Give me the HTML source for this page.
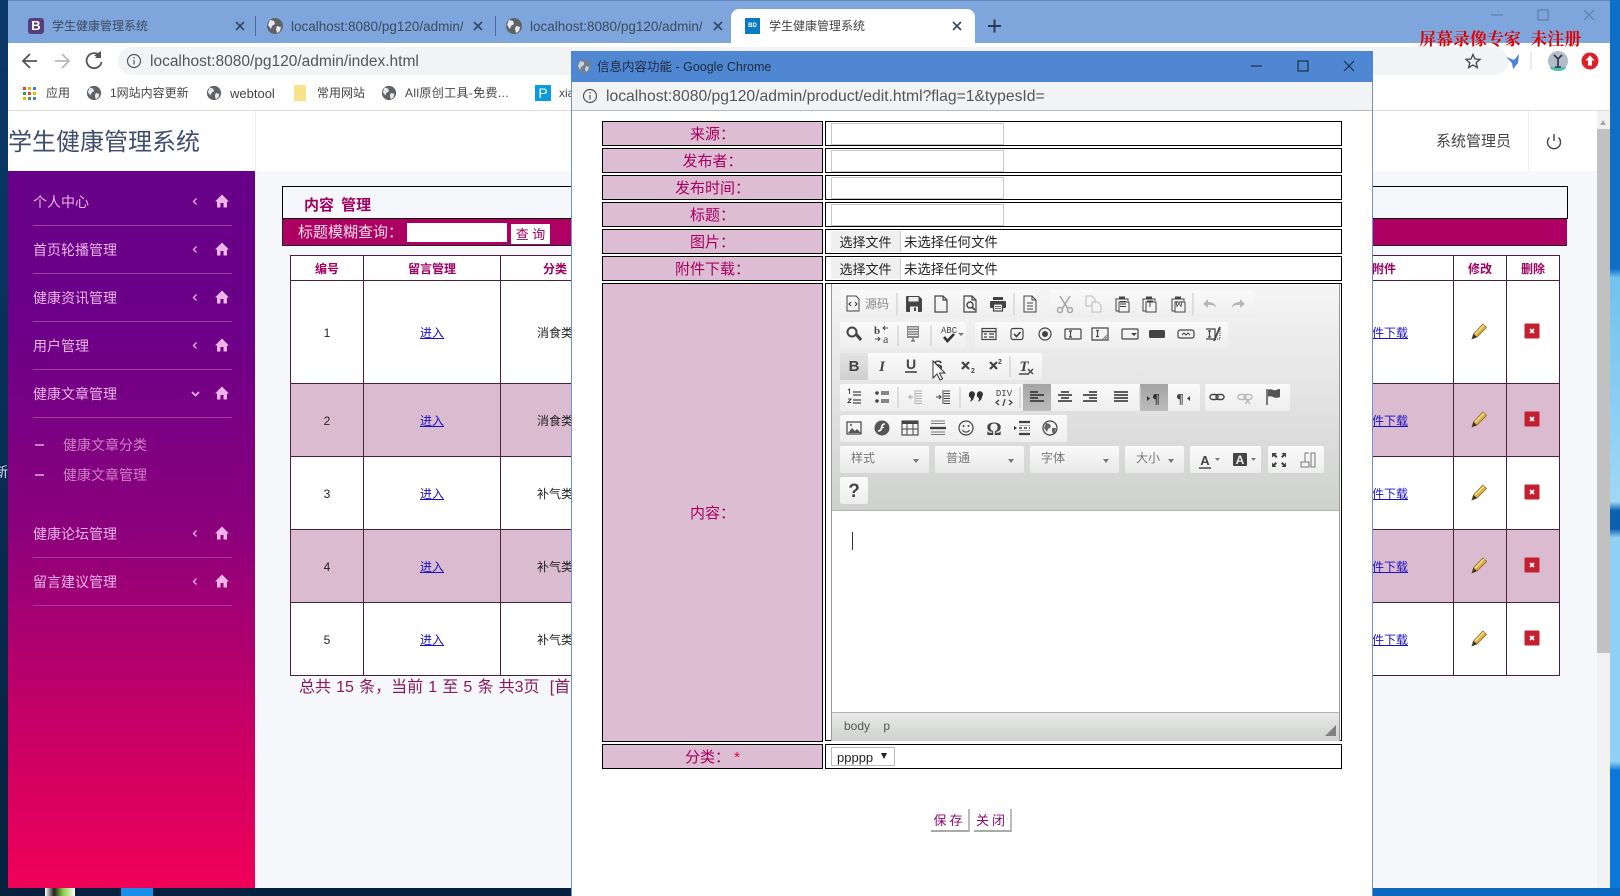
<!DOCTYPE html>
<html lang="zh"><head><meta charset="utf-8"><title>学生健康管理系统</title>
<style>
html,body{margin:0;padding:0}
body{position:relative;width:1620px;height:896px;overflow:hidden;background:#06213d;font-family:"Liberation Sans","Noto Sans CJK SC",sans-serif;font-size:12px;color:#333}
.a{position:absolute}
.t{position:absolute;white-space:nowrap;line-height:1}
.c{transform:translateX(-50%)}
.side{color:#ecb4e8;font-size:14px}
.sub{color:#cf7fc6;font-size:14px}
.ln{position:absolute;left:33px;width:199px;height:1px;background:#a63aa0}
.h{position:absolute;line-height:1;white-space:nowrap;transform:translateX(-50%);font-size:12px;color:#a0005f;font-weight:bold;top:263px}
.v{position:absolute;width:1px;top:255px;height:421px;background:#4a2040}
.hl{position:absolute;left:290px;width:1270px;height:1px;background:#4a2040}
.lk{color:#1a10c8;text-decoration:underline;font-size:12px;position:absolute;white-space:nowrap;line-height:1}
.num{font-size:12px;color:#222}
.lab{position:absolute;left:602px;width:219px;height:23px;background:#ddbdd3;border:1px solid #000;text-align:center;line-height:25px;font-size:15px;color:#a8005f}
.val{position:absolute;left:825px;width:515px;height:23px;background:#fff;border:1px solid #000;border-width:1.5px}
.inp{position:absolute;left:831px;width:171px;height:20px;background:#fff;border:1px solid #c8c8c8}
.fb{position:absolute;left:831px;width:69px;height:21px;background:#efefef;border-right:1px solid #ccc;text-align:center;line-height:23px;font-size:13px;color:#222}
.ft{position:absolute;left:904px;font-size:13.4px;color:#222;white-space:nowrap;line-height:23px}
.tg{position:absolute;background:linear-gradient(#fafafa,#eeeeee);border-radius:2px}
.cb{position:absolute;top:446px;height:27px;background:linear-gradient(#fafafa,#e8e8e8);border-radius:2px;font-size:12px;color:#777;line-height:27px}
.cb span{position:absolute;left:11px;top:-1px}
.cb i{position:absolute;right:10px;top:13px;width:0;height:0;border:3px solid transparent;border-top:4px solid #777;border-bottom:0}
</style></head>
<body>

<!-- desktop strips -->
<div class="a" style="left:0;top:0;width:8px;height:896px;background:linear-gradient(#0a3a6a,#06213d)"></div>
<div class="t" style="left:-6px;top:465px;font-size:14px;color:#dde">新</div>
<div class="a" style="left:1610px;top:0;width:10px;height:896px;background:linear-gradient(#0e6fc8 0,#0e6fc8 30%,#6fc3f0 31%,#a0d8f5 56%,#0a60b0 57%,#0a60b0 59%,#8fd0f5 60%,#8fd0f5 85%,#0a78d8 86%)"></div>
<div class="a" style="left:1372px;top:888px;width:248px;height:8px;background:#0a68c0"></div>
<div class="a" style="left:45px;top:888px;width:30px;height:8px;background:linear-gradient(90deg,#fff,#222 30%,#8c4 60%,#fff)"></div>
<div class="a" style="left:121px;top:888px;width:32px;height:8px;background:#1a90e8"></div>

<!-- browser chrome -->
<div class="a" style="left:8px;top:0;width:1602px;height:43px;background:#7ea6dd;border-top:1px solid #5f86bd;box-sizing:border-box"></div>
<div class="a" style="left:8px;top:43px;width:1602px;height:68px;background:#fff;border-bottom:1px solid #dcdcdc;box-sizing:border-box"></div>
<div class="a" style="left:731px;top:9px;width:244px;height:34px;background:#fff;border-radius:8px 8px 0 0"></div>
<div class="a" style="left:118px;top:47px;width:1390px;height:28px;background:#f1f3f4;border-radius:14px"></div>

<div class="a" style="left:28px;top:18px;width:16px;height:16px;background:#563d7c;border-radius:3px;color:#fff;font-weight:bold;font-size:13px;line-height:16px;text-align:center">B</div>
<div class="t" style="left:52px;top:20px;color:#3c4a5e">学生健康管理系统</div>
<div class="t" style="left:291px;top:19px;width:172px;overflow:hidden;font-size:13.5px;line-height:15px;color:#3c4a5e">localhost:8080/pg120/admin/</div>
<div class="t" style="left:530px;top:19px;width:172px;overflow:hidden;font-size:13.5px;line-height:15px;color:#3c4a5e">localhost:8080/pg120/admin/</div>
<div class="a" style="left:255px;top:16px;width:1px;height:20px;background:#4a6a9a"></div>
<div class="a" style="left:495px;top:16px;width:1px;height:20px;background:#4a6a9a"></div>
<div class="a" style="left:745px;top:18px;width:15px;height:16px;background:#0a7ac4;color:#fff;font-size:6px;font-weight:bold;line-height:16px;text-align:center">BD</div>
<div class="t" style="left:769px;top:20px;color:#444">学生健康管理系统</div>
<div class="t" style="left:150px;top:54px;font-size:15.5px;line-height:16px;color:#555">localhost:8080/pg120/admin/index.html</div>

<div class="t" style="left:46px;top:87px;color:#444">应用</div>
<div class="t" style="left:110px;top:87px;color:#444">1网站内容更新</div>
<div class="t" style="left:230px;top:87px;color:#444;font-size:13px">webtool</div>
<div class="t" style="left:317px;top:87px;color:#444">常用网站</div>
<div class="t" style="left:405px;top:87px;color:#444;letter-spacing:.35px">All原创工具-免费...</div>
<div class="a" style="left:535px;top:85px;width:16px;height:16px;background:#0a9ae0;color:#fff;font-size:14px;line-height:16px;text-align:center">P</div>
<div class="t" style="left:559px;top:87px;color:#444">xia</div>
<div class="a" style="left:294px;top:85px;width:12px;height:16px;background:#f8e38a;border-radius:1px"></div>

<div class="t" style="left:1419px;top:31px;font-family:'Liberation Serif','Noto Serif CJK SC',serif;font-size:17px;font-weight:bold;color:#e00000;word-spacing:5px">屏幕录像专家 未注册</div>

<!-- app header -->
<div class="a" style="left:8px;top:111px;width:1589px;height:60px;background:#fff"></div>
<div class="a" style="left:255px;top:111px;width:1px;height:60px;background:#eee"></div>
<div class="a" style="left:1528px;top:111px;width:1px;height:60px;background:#eee"></div>
<div class="t" style="left:8px;top:131px;font-size:24px;color:#3f4d6e">学生健康管理系统</div>
<div class="t" style="left:1436px;top:134px;font-size:15px;color:#444">系统管理员</div>

<!-- main background -->
<div class="a" style="left:255px;top:171px;width:1342px;height:717px;background:#f5f7fb"></div>

<!-- sidebar -->
<div class="a" style="left:8px;top:171px;width:247px;height:717px;background:linear-gradient(#680088 0,#6c0088 22%,#8b007c 50%,#c40066 76%,#f00058 100%)"></div>
<div class="t side" style="left:33px;top:195px">个人中心</div><div class="ln" style="top:225px"></div>
<div class="t side" style="left:33px;top:243px">首页轮播管理</div><div class="ln" style="top:273px"></div>
<div class="t side" style="left:33px;top:291px">健康资讯管理</div><div class="ln" style="top:321px"></div>
<div class="t side" style="left:33px;top:339px">用户管理</div><div class="ln" style="top:369px"></div>
<div class="t side" style="left:33px;top:387px">健康文章管理</div><div class="ln" style="top:417px"></div>
<div class="a" style="left:35px;top:444px;width:9px;height:2px;background:#cf7fc6"></div><div class="t sub" style="left:63px;top:438px">健康文章分类</div>
<div class="a" style="left:35px;top:474px;width:9px;height:2px;background:#cf7fc6"></div><div class="t sub" style="left:63px;top:468px">健康文章管理</div>
<div class="t side" style="left:33px;top:527px">健康论坛管理</div><div class="ln" style="top:557px"></div>
<div class="t side" style="left:33px;top:575px">留言建议管理</div><div class="ln" style="top:605px"></div>

<!-- content head -->
<div class="a" style="left:282px;top:186px;width:1286px;height:33px;box-sizing:border-box;border:1px solid #000;background:#f5f7fb"></div>
<div class="t" style="left:304px;top:198px;font-size:15px;font-weight:bold;color:#a0005f;word-spacing:3px">内容 管理</div>
<div class="a" style="left:282px;top:219px;width:1285px;height:27px;background:#ae0062;box-sizing:border-box;border-bottom:1px solid #222;border-left:1px solid #222"></div>
<div class="t" style="left:298px;top:225px;font-size:15px;color:#f0e0ea">标题模糊查询：</div>
<div class="a" style="left:407px;top:223px;width:100px;height:19px;background:#fff"></div>
<div class="a" style="left:511px;top:224px;width:39px;height:20px;background:#fff;color:#a0005f;font-size:13px;line-height:21px;text-align:center">查 询</div>

<!-- table -->
<div class="a" style="left:290px;top:255px;width:1270px;height:420px;background:#fff"></div>
<div class="a" style="left:290px;top:383px;width:1270px;height:73px;background:#dabbd0"></div>
<div class="a" style="left:290px;top:529px;width:1270px;height:73px;background:#dabbd0"></div>
<div class="hl" style="top:255px"></div><div class="hl" style="top:280px"></div><div class="hl" style="top:383px"></div><div class="hl" style="top:456px"></div><div class="hl" style="top:529px"></div><div class="hl" style="top:602px"></div><div class="hl" style="top:675px"></div>
<div class="v" style="left:290px"></div><div class="v" style="left:363px"></div><div class="v" style="left:500px"></div><div class="v" style="left:1453px"></div><div class="v" style="left:1506px"></div><div class="v" style="left:1559px"></div>
<div class="h" style="left:327px">编号</div><div class="h" style="left:432px">留言管理</div><div class="h" style="left:555px">分类</div><div class="h" style="left:1384px">附件</div><div class="h" style="left:1480px">修改</div><div class="h" style="left:1533px">删除</div>

<div class="t c num" style="left:327px;top:327px">1</div><div class="lk c" style="left:432px;top:327px">进入</div><div class="t" style="left:537px;top:327px;color:#222">消食类</div><div class="lk" style="left:1360px;top:327px">附件下载</div>
<div class="t c num" style="left:327px;top:415px">2</div><div class="lk c" style="left:432px;top:415px">进入</div><div class="t" style="left:537px;top:415px;color:#222">消食类</div><div class="lk" style="left:1360px;top:415px">附件下载</div>
<div class="t c num" style="left:327px;top:488px">3</div><div class="lk c" style="left:432px;top:488px">进入</div><div class="t" style="left:537px;top:488px;color:#222">补气类</div><div class="lk" style="left:1360px;top:488px">附件下载</div>
<div class="t c num" style="left:327px;top:561px">4</div><div class="lk c" style="left:432px;top:561px">进入</div><div class="t" style="left:537px;top:561px;color:#222">补气类</div><div class="lk" style="left:1360px;top:561px">附件下载</div>
<div class="t c num" style="left:327px;top:634px">5</div><div class="lk c" style="left:432px;top:634px">进入</div><div class="t" style="left:537px;top:634px;color:#222">补气类</div><div class="lk" style="left:1360px;top:634px">附件下载</div>
<div class="t" style="left:299px;top:680px;font-size:16px;color:#8a1a5a;word-spacing:.7px">总共 15 条，当前 1 至 5 条 共3页 &nbsp;[首页]</div>

<!-- scrollbar -->
<div class="a" style="left:1597px;top:111px;width:13px;height:777px;background:#f1f1f1"></div>
<div class="a" style="left:1597px;top:129px;width:13px;height:524px;background:#c1c1c1"></div>
<div class="a" style="left:1600px;top:120px;width:0;height:0;border:3.5px solid transparent;border-bottom:5px solid #a8a8a8;border-top:0"></div>

<!-- modal -->
<div class="a" style="left:571px;top:51px;width:802px;height:845px;background:#fff;box-sizing:border-box;border-left:1px solid #6f93c8;border-right:1px solid #6f93c8"></div>
<div class="a" style="left:571px;top:51px;width:802px;height:31px;background:#5087d3"></div>
<div class="a" style="left:572px;top:82px;width:800px;height:28px;background:#f1f3f4;border-bottom:1px solid #bbb"></div>
<div class="t" style="left:597px;top:61px;font-size:12.5px;color:#1d2a3c">信息内容功能 - Google Chrome</div>
<div class="t" style="left:606px;top:89px;font-size:15.7px;line-height:16px;color:#555">localhost:8080/pg120/admin/product/edit.html?flag=1&amp;typesId=</div>

<!-- form -->
<div class="lab" style="top:121px">来源：</div><div class="val" style="top:121px"></div><div class="inp" style="top:123px"></div>
<div class="lab" style="top:148px">发布者：</div><div class="val" style="top:148px"></div><div class="inp" style="top:150px"></div>
<div class="lab" style="top:175px">发布时间：</div><div class="val" style="top:175px"></div><div class="inp" style="top:177px"></div>
<div class="lab" style="top:202px">标题：</div><div class="val" style="top:202px"></div><div class="inp" style="top:204px"></div>
<div class="lab" style="top:229px">图片：</div><div class="val" style="top:229px"></div><div class="fb" style="top:231px">选择文件</div><div class="ft" style="top:231px">未选择任何文件</div>
<div class="lab" style="top:256px">附件下载：</div><div class="val" style="top:256px"></div><div class="fb" style="top:258px">选择文件</div><div class="ft" style="top:258px">未选择任何文件</div>
<div class="lab" style="top:283px;height:457px;line-height:459px">内容：</div>
<div class="val" style="top:283px;height:456px"></div>
<div class="lab" style="top:744px">分类： <span style="color:#e8003c">*</span></div><div class="val" style="top:744px"></div>
<div class="a" style="left:831px;top:747px;width:64px;height:19px;box-sizing:border-box;border:1px solid #bbb;background:#fff;font-size:13px;line-height:19px;padding-left:5px;color:#222">ppppp</div>
<div class="a" style="left:881px;top:753px;width:0;height:0;border:3.5px solid transparent;border-top:6px solid #222;border-bottom:0"></div>

<!-- editor -->
<div class="a" style="left:832px;top:285px;width:507px;height:226px;background:linear-gradient(#f5f5f5,#cfd1cf);border-bottom:1px solid #b5b5b5;box-sizing:border-box"></div>
<div class="a" style="left:832px;top:712px;width:507px;height:29px;background:linear-gradient(#e8e9e8,#cfd1cf);border-top:1px solid #b5b5b5;box-sizing:border-box"></div>
<div class="a" style="left:831px;top:284px;width:1px;height:457px;background:#999"></div>
<div class="a" style="left:1339px;top:284px;width:1px;height:457px;background:#999"></div>
<div class="t" style="left:844px;top:720px;font-size:12px;color:#555;word-spacing:10px">body p</div>
<div class="a" style="left:852px;top:532px;width:1px;height:18px;background:#333"></div>

<div class="tg" style="left:840px;top:290px;width:196px;height:27px"></div>
<div class="tg" style="left:1050px;top:290px;width:203px;height:27px"></div>
<div class="tg" style="left:840px;top:322px;width:126px;height:27px"></div>
<div class="tg" style="left:975px;top:322px;width:253px;height:27px"></div>
<div class="tg" style="left:840px;top:353px;width:28px;height:27px;background:linear-gradient(#e4e4e4,#cfcfcf)"></div>
<div class="tg" style="left:868px;top:353px;width:174px;height:27px"></div>
<div class="tg" style="left:840px;top:384px;width:183px;height:27px"></div>
<div class="tg" style="left:1023px;top:384px;width:177px;height:27px"></div>
<div class="a" style="left:1023px;top:384px;width:28px;height:27px;background:linear-gradient(#a4a4a4,#bcbcbc)"></div>
<div class="a" style="left:1140px;top:384px;width:28px;height:27px;background:linear-gradient(#a4a4a4,#bcbcbc)"></div>
<div class="tg" style="left:1205px;top:384px;width:85px;height:27px"></div>
<div class="tg" style="left:840px;top:415px;width:227px;height:27px"></div>
<div class="cb" style="left:840px;width:89px"><span>样式</span><i></i></div>
<div class="cb" style="left:935px;width:89px"><span>普通</span><i></i></div>
<div class="cb" style="left:1030px;width:89px"><span>字体</span><i></i></div>
<div class="cb" style="left:1125px;width:59px"><span>大小</span><i></i></div>
<div class="tg" style="left:1190px;top:446px;width:71px;height:27px"></div>
<div class="tg" style="left:1268px;top:446px;width:56px;height:27px"></div>
<div class="tg" style="left:840px;top:477px;width:28px;height:27px"></div>
<div class="t" style="left:865px;top:298px;font-size:12px;color:#888">源码</div>

<!-- buttons -->
<div class="a" style="left:931px;top:809px;width:37px;height:21px;background:#fff;border-right:2px solid #bbb;border-bottom:2px solid #aaa;text-align:center;line-height:24px;font-size:13px;color:#8a0a70;letter-spacing:3px">保存</div>
<div class="a" style="left:974px;top:809px;width:36px;height:21px;background:#fff;border-right:2px solid #bbb;border-bottom:2px solid #aaa;text-align:center;line-height:24px;font-size:13px;color:#8a0a70;letter-spacing:3px">关闭</div>

<!-- icon layer -->
<svg class="a" style="left:0;top:0" width="1620" height="896" viewBox="0 0 1620 896" fill="none" stroke="#444" stroke-width="1.2">
<defs>
<symbol id="gl" viewBox="-9 -9 18 18" overflow="visible"><circle r="8" fill="#5f6368" stroke="none"/><path d="M-5-6l4 1 1 3-3 2-1 3-3-4zM2 0l4 1-1 4-3 2-1-4z" fill="#e8eaed" stroke="none"/></symbol>
<symbol id="hm" viewBox="-8 -8 16 16" overflow="visible"><path d="M0-6.5L7 .5H5v6H1.5V2h-3v4.5H-5V.5H-7z" fill="#f0b4e8" stroke="none"/></symbol>
<symbol id="pc" viewBox="-9 -9 18 18" overflow="visible"><path d="M-7 8l1.5-5L4-7l3.5 3.5L-2 6z" fill="#e0b040" stroke="#8a6a20" stroke-width=".8"/><path d="M-7 8l1.5-5 3.5 3z" fill="#333" stroke="none"/><path d="M-4 3L5-6" stroke="#fff0b0"/></symbol>
<symbol id="dl" viewBox="-8 -8 16 16" overflow="visible"><rect x="-7.500" y="-7.500" width="15" height="15" rx="1" fill="#c4202f" stroke="none"/><path d="M-2-2l4 4M2-2l-4 4" stroke="#fff" stroke-width="1.700"/></symbol>
<symbol id="chv" viewBox="-4 -6 8 12" overflow="visible"><path d="M2-4L-2 0l4 4" stroke="#e8a8e4" stroke-width="1.800"/></symbol>
<symbol id="clip" viewBox="-9 -9 18 18" overflow="visible"><path d="M-3-5H-6V7H-3M3-5h3v2" stroke="#444" stroke-width="1"/><rect x="-3" y="-7.500" width="6" height="3" fill="#444" stroke="none"/><rect x="-3" y="-2" width="10" height="10" fill="#f4f4f4" stroke="#444" stroke-width="1"/></symbol>
</defs>

<!-- tab icons -->
<g stroke="#33475f" stroke-width="1.6"><path d="M236 22l8 8M244 22l-8 8M474 22l8 8M482 22l-8 8M714 22l8 8M722 22l-8 8M953 22l8 8M961 22l-8 8"/></g>
<path d="M988 26h13M994.500 19.500v13" stroke="#2d3a4d" stroke-width="2"/>
<use href="#gl" x="266" y="17" width="18" height="18"/><use href="#gl" x="505" y="17" width="18" height="18"/>
<!-- window controls -->
<g stroke="#5d7ea9" stroke-width="1.200"><path d="M1491 15h12"/><rect x="1538" y="10" width="10" height="10"/><path d="M1584 10l10 10M1594 10l-10 10"/></g>
<!-- nav -->
<g stroke="#555" stroke-width="1.800"><path d="M37 61H24M30 54l-7 7 7 7"/><path d="M55 61h13M62 54l7 7-7 7" stroke="#b8b8b8"/><path d="M100 56a7.500 7.500 0 1 0 1.500 6"/><path d="M101 52v6h-6" fill="#555" stroke="none"/></g>
<path d="M94 55.500l7-4.500v7z" fill="#555" stroke="none"/>
<g stroke="#555"><circle cx="134" cy="61" r="6.500"/><path d="M134 60v4.500M134 57v1.500"/></g>
<path d="M1473 54.500l2 4.500 5 .4-3.800 3.300 1.200 4.900-4.400-2.600-4.400 2.600 1.200-4.900-3.800-3.300 5-.4z" stroke="#444" stroke-width="1.300"/>
<path d="M1506 57l8 3 5-6-1 9-5 6-1-6z" fill="#4a80e0" stroke="none"/>
<path d="M1531 52v18" stroke="#ddd"/>
<circle cx="1558" cy="61" r="10" fill="#b4bcc8" stroke="none"/><path d="M1550 67a8 4 0 0 0 16 0z" fill="#50c0b0" stroke="none"/><path d="M1554 55l4 4 4-4M1558 59v8M1555 67h6" stroke="#334" stroke-width="1.600"/>
<circle cx="1590" cy="61" r="8.500" fill="#d8232a" stroke="none"/><path d="M1590 55.500l-4.500 5h2.500v5h4v-5h2.500z" fill="#fff" stroke="none"/>
<!-- bookmarks -->
<g fill="#e0463c" stroke="none"><rect x="23" y="87" width="3" height="3"/><rect x="28" y="87" width="3" height="3" fill="#f0b000"/><rect x="33" y="87" width="3" height="3" fill="#3a80e0"/><rect x="23" y="92" width="3" height="3" fill="#30a050"/><rect x="28" y="92" width="3" height="3" fill="#e0463c"/><rect x="33" y="92" width="3" height="3" fill="#f0b000"/><rect x="23" y="97" width="3" height="3" fill="#f0b000"/><rect x="28" y="97" width="3" height="3" fill="#30a050"/><rect x="33" y="97" width="3" height="3" fill="#3a80e0"/></g>
<use href="#gl" x="86" y="85" width="16" height="16"/><use href="#gl" x="206" y="85" width="16" height="16"/><use href="#gl" x="381" y="85" width="16" height="16"/>
<!-- header power -->
<path d="M1549.500 137.500a6.500 6.500 0 1 0 9 0M1554 134v7" stroke="#444" stroke-width="1.400"/>
<!-- sidebar icons -->
<use href="#chv" x="192" y="197" width="6" height="9"/><use href="#hm" x="214" y="193" width="16" height="16"/>
<use href="#chv" x="192" y="245" width="6" height="9"/><use href="#hm" x="214" y="241" width="16" height="16"/>
<use href="#chv" x="192" y="293" width="6" height="9"/><use href="#hm" x="214" y="289" width="16" height="16"/>
<use href="#chv" x="192" y="341" width="6" height="9"/><use href="#hm" x="214" y="337" width="16" height="16"/>
<path d="M192 392l3.500 3.500 3.500-3.500" stroke="#e8a8e4" stroke-width="1.800"/><use href="#hm" x="214" y="385" width="16" height="16"/>
<use href="#chv" x="192" y="529" width="6" height="9"/><use href="#hm" x="214" y="525" width="16" height="16"/>
<use href="#chv" x="192" y="577" width="6" height="9"/><use href="#hm" x="214" y="573" width="16" height="16"/>
<!-- table icons -->
<use href="#pc" x="1470" y="322" width="18" height="18"/><use href="#dl" x="1524" y="323" width="16" height="16"/>
<use href="#pc" x="1470" y="410" width="18" height="18"/><use href="#dl" x="1524" y="411" width="16" height="16"/>
<use href="#pc" x="1470" y="483" width="18" height="18"/><use href="#dl" x="1524" y="484" width="16" height="16"/>
<use href="#pc" x="1470" y="556" width="18" height="18"/><use href="#dl" x="1524" y="557" width="16" height="16"/>
<use href="#pc" x="1470" y="629" width="18" height="18"/><use href="#dl" x="1524" y="630" width="16" height="16"/>
</svg>

<!-- modal-level icons -->
<svg class="a" style="left:0;top:0" width="1620" height="896" viewBox="0 0 1620 896" fill="none" stroke="#444" stroke-width="1.200">
<g transform="translate(584 66)"><circle r="7" fill="#6f8096" stroke="none"/><path d="M-4-5l4 1 0 3-3 2-1 3-2-4zM2 0l3 1-1 3-2 2-1-3z" fill="#c8d2e0" stroke="none"/></g>
<g stroke="#1f2f46" stroke-width="1.200"><path d="M1251 66h11"/><rect x="1298" y="61" width="10" height="10"/><path d="M1344 61l10 10M1354 61l-10 10"/></g>
<g stroke="#555"><circle cx="590" cy="96" r="6.500"/><path d="M590 95v4.500M590 92v1.500"/></g>
<path d="M1336 725l-11 11h11z" fill="#808080" stroke="none"/>

<!-- separators -->
<path d="M897 293v22M1014 293v22M1193 293v22M898 325v21M931 325v21M1010 356v21M898 387v21M960 387v21M1020 387v21M1140 387v21" stroke="#cfcfcf"/>

<!-- Row 1 -->
<g transform="translate(853 304)"><path d="M-6-8h9l3 3v12h-12z" stroke-width="1"/><path d="M-2-2l-2 2 2 2M2-2l2 2-2 2"/></g>
<g transform="translate(914 304)"><path d="M-8-7a1 1 0 0 1 1-1h12l3 3v12a1 1 0 0 1-1 1h-14a1 1 0 0 1-1-1z" fill="#444" stroke="none"/><rect x="-5.500" y="-7" width="10" height="4.500" fill="#eee" stroke="none"/><rect x="-4" y="2.500" width="8" height="5.500" fill="#eee" stroke="none"/><rect x="0" y="3.500" width="2" height="3.500" fill="#444" stroke="none"/></g>
<g transform="translate(941 304)"><path d="M-6-8h8l4 4v12h-12zM2-8v4h4"/></g>
<g transform="translate(970 304)"><path d="M-6-8h8l4 4v12h-12zM2-8v4h4"/><circle cx="0" cy="1" r="3" stroke-width="1.400"/><path d="M2 3l3 3" stroke-width="1.600"/></g>
<g transform="translate(998 304)"><rect x="-5" y="-7" width="10" height="3" fill="#444" stroke="none"/><rect x="-8" y="-3" width="16" height="7" rx="1" fill="#444" stroke="none"/><rect x="-4.500" y="0" width="9" height="7" fill="#f0f0f0" stroke="#444"/><path d="M-3 2.500h6M-3 4.500h6" stroke-width=".8"/></g>
<g transform="translate(1030 304)"><path d="M-6-8h8l4 4v12h-12zM2-8v4h4M-3-1h6M-3 2h6M-3 5h6" stroke-width="1"/></g>
<g transform="translate(1065 304)" stroke="#a8a8a8" stroke-width="1.600"><path d="M-5-8L3 5M5-8L-3 5"/><circle cx="-5" cy="6" r="2.500"/><circle cx="5" cy="6" r="2.500"/></g>
<g transform="translate(1093 304)" stroke="#bbb" stroke-width="1"><path d="M-7-8h6l3 3v7h-9z"/><path d="M-1-2h6l3 3v7h-9z" fill="#f4f4f4"/></g>
<g stroke-width="1">
<use href="#clip" x="1113" y="295" width="18" height="18"/><path d="M1120 301.500h6M1120 304h6M1120 306.500h6" stroke-width=".9"/>
<use href="#clip" x="1140" y="295" width="18" height="18"/><path d="M1147 301h6M1150 301v6" stroke-width="1"/>
<use href="#clip" x="1169" y="295" width="18" height="18"/><path d="M1176 301l1 5.500 2-3.500 2 3.500 1-5.500" stroke-width=".8"/>
</g>
<path d="M1203 304l5-5v3c5 0 8 2 8 6-2-3-4-3-8-3v3z" fill="#b8b8b8" stroke="none"/>
<path d="M1245 304l-5-5v3c-5 0-8 2-8 6 2-3 4-3 8-3v3z" fill="#b8b8b8" stroke="none"/>

<!-- Row 2 -->
<g transform="translate(854 334)"><circle cx="-2" cy="-2" r="4.500" stroke-width="2"/><path d="M2-.0L7 6" stroke-width="3"/></g>
<text x="874" y="334" font-size="11" font-weight="bold" fill="#444" stroke="none" font-family="'Liberation Serif',serif">b</text><text x="883" y="343" font-size="12" fill="#444" stroke="none" font-family="'Liberation Serif',serif">a</text>
<path d="M883 328h5M885 326l-2 2 2 2M875 339h5M878 337l2 2-2 2" stroke-width=".9"/>
<g transform="translate(913 334)"><rect x="-6" y="-8" width="12" height="12" fill="#888" stroke="none"/><path d="M-5-6h10M-5-3.500h10M-5-1h10M-5 1.500h10" stroke="#eee" stroke-width="1"/><path d="M-2 7h4M0 4v3" stroke-width="1"/></g>
<text x="941" y="333" font-size="9" font-family="'Liberation Mono',monospace" fill="#444" stroke="none">ABC</text>
<path d="M944 337l3.500 4 6.500-7" stroke="#333" stroke-width="2.600"/><path d="M958 333l3 3 3-3z" fill="#777" stroke="none"/>
<g transform="translate(989 334)"><rect x="-7" y="-5.500" width="14" height="11" stroke-width="1.200"/><path d="M-7-2.500h14" stroke-width="1.400"/><path d="M-5 0h3M-5 3h3M0 0h5M0 3h5" stroke-width="1.200"/></g>
<g transform="translate(1017 334)"><rect x="-6" y="-5.500" width="12" height="11" rx="2" stroke-width="1.200"/><path d="M-3 0l2.500 2.500 4-4.500" stroke-width="1.700"/></g>
<g transform="translate(1045 334)"><circle r="6" stroke-width="1.200"/><circle r="3" fill="#444" stroke="none"/></g>
<g transform="translate(1073 334)"><rect x="-8" y="-5" width="16" height="10" rx="1"/><path d="M-4-3h3M-4 3h3M-2.500-3v6"/></g>
<g transform="translate(1100 334)"><path d="M-8-6h16v12h-16z"/><path d="M-4-3.500h3M-4 2.500h3M-2.500-3.500v6"/><path d="M3 5l4-4M5 5l2-2" stroke="#888"/></g>
<g transform="translate(1130 334)"><rect x="-8" y="-5" width="16" height="10" rx="1"/><path d="M1-1l3 3 3-3z" fill="#444" stroke="none"/></g>
<g transform="translate(1157 334)"><rect x="-8" y="-4" width="16" height="8" rx="1.500" fill="#444" stroke="none"/></g>
<g transform="translate(1186 334)"><rect x="-8" y="-4" width="16" height="8" rx="2"/><path d="M-4 1l2-2 2 2 2-2 2 2" stroke-width="1"/></g>
<g transform="translate(1213 334)"><path d="M-7-5h9v10h-9M-5-3h3M-5 3h3M-3.500-3v6"/><path d="M1 7L7-7" stroke-width="1.800"/><path d="M5-5h2v10h-5" stroke-dasharray="1 1"/></g>

<!-- Row 3 -->
<text x="854" y="371" text-anchor="middle" font-size="15" font-weight="bold" fill="#444" stroke="none" font-family="'Liberation Sans',sans-serif">B</text>
<text x="882" y="371" text-anchor="middle" font-size="15" font-weight="bold" font-style="italic" fill="#444" stroke="none" font-family="'Liberation Serif',serif">I</text>
<text x="911" y="369" text-anchor="middle" font-size="14" font-weight="bold" fill="#444" stroke="none" font-family="'Liberation Sans',sans-serif">U</text><path d="M905 372h12" stroke-width="1.600"/>
<text x="938" y="370" text-anchor="middle" font-size="14" font-weight="bold" fill="#444" stroke="none" font-family="'Liberation Sans',sans-serif">S</text>
<g stroke-width="2.200"><path d="M962 362l7 7M969 362l-7 7M990 362l7 7M997 362l-7 7"/></g>
<text x="971" y="373" font-size="7" font-weight="bold" fill="#444" stroke="none" font-family="'Liberation Sans',sans-serif">2</text>
<text x="998" y="364" font-size="7" font-weight="bold" fill="#444" stroke="none" font-family="'Liberation Sans',sans-serif">2</text>
<text x="1024" y="371" text-anchor="middle" font-size="15" font-weight="bold" font-style="italic" fill="#444" stroke="none" font-family="'Liberation Serif',serif">T</text><path d="M1019 374h10" stroke-width="1.400"/><path d="M1028 369l5 5M1033 369l-5 5" stroke-width="1.400"/>
<!-- cursor -->
<path d="M933 361v17l4-4 3 6 2.500-1.200-3-5.800h5.500z" fill="#fff" stroke="#333" stroke-width="1"/>

<!-- Row 4 -->
<g transform="translate(854 397)"><path d="M-1-5h8M-1-2h8M-1 3h8M-1 6h8" stroke-width="1.300"/><path d="M-6-7l1.500-1v5M-6 2h3l-3 3.500h3" stroke-width="1"/></g>
<g transform="translate(882 397)"><circle cx="-5" cy="-4" r="1.800" fill="#444" stroke="none"/><circle cx="-5" cy="4" r="1.800" fill="#444" stroke="none"/><path d="M-1-5h8M-1-3h8M-1 3h8M-1 5h8" stroke-width="1.200"/></g>
<g transform="translate(915 397)" stroke="#b0b0b0" stroke-width="1"><path d="M1-6h6M1-3.500h6M1-1h6M1 1.500h6M1 4h6M1 6.500h6M0-7v14M-7 0h5M-4-2l-2 2 2 2"/></g>
<g transform="translate(943 397)" stroke-width="1"><path d="M1-6h6M1-3.500h6M1-1h6M1 1.500h6M1 4h6M1 6.500h6M0-7v14M-7 0h5M-4-2l2 2-2 2"/></g>
<g transform="translate(975 397)"><path d="M-6-3a3 3 0 1 1 5 2.500c0 2-1 4-4 5.500 1-2 1-3 1-4a3 3 0 0 1-2-4zM2-3a3 3 0 1 1 5 2.500c0 2-1 4-4 5.500 1-2 1-3 1-4a3 3 0 0 1-2-4z" fill="#333" stroke="none"/></g>
<text x="1004" y="396" text-anchor="middle" font-size="9" fill="#444" stroke="none" font-family="'Liberation Mono',monospace">DIV</text>
<path d="M999 400l-3 2.500 3 2.500M1009 400l3 2.500-3 2.500M1005 399l-2 7" stroke-width="1.300"/>
<g stroke="#2a2a2a" stroke-width="1.600"><path d="M1030 392h8M1030 395h14M1030 398h8M1030 401h14"/><path d="M1061 392h8M1058 395h14M1061 398h8M1058 401h14"/><path d="M1089 392h8M1083 395h14M1089 398h8M1083 401h14"/><path d="M1114 392h14M1114 395h14M1114 398h14M1114 401h14"/></g>
<text x="1156" y="403" text-anchor="middle" font-size="14" font-weight="bold" fill="#333" stroke="none" font-family="'Liberation Serif',serif">¶</text><path d="M1147 396l3 2.500-3 2.500z" fill="#333" stroke="none"/>
<text x="1180" y="403" text-anchor="middle" font-size="14" font-weight="bold" fill="#444" stroke="none" font-family="'Liberation Serif',serif">¶</text><path d="M1190 396l-3 2.500 3 2.500z" fill="#444" stroke="none"/>
<g transform="translate(1217 397)" stroke-width="1.400"><rect x="-7" y="-2.500" width="8" height="5" rx="2.500"/><rect x="-1" y="-2.500" width="8" height="5" rx="2.500"/></g>
<g transform="translate(1245 397)" stroke="#bbb" stroke-width="1.400"><rect x="-7" y="-2.500" width="8" height="5" rx="2.500"/><rect x="-1" y="-2.500" width="8" height="5" rx="2.500"/><path d="M0 2l5 5M5 2l-5 5"/></g>
<g transform="translate(1273 397)"><path d="M-6-8v16" stroke-width="1.400"/><path d="M-5-7c3-2 5 1 8 0s3-1 4-1v8c-3 1-5 1-7 0s-4-1-5 0z" fill="#555" stroke="none"/></g>

<!-- Row 5 -->
<g transform="translate(854 428)"><rect x="-7" y="-6" width="14" height="12" stroke-width="1.200"/><path d="M-6 5l4-5 3 3 2-2 4 4z" fill="#555" stroke="none"/><circle cx="-3" cy="-3" r="1.200" fill="#777" stroke="none"/></g>
<g transform="translate(882 428)"><circle r="7.500" fill="#555" stroke="none"/><path d="M3-4c-3 0-3 2-3.500 4S-2 3-4 3" stroke="#eee" stroke-width="1.800"/><path d="M-1-.5h3" stroke="#eee" stroke-width="1.300"/></g>
<g transform="translate(910 428)"><rect x="-8" y="-7" width="16" height="14" stroke-width="1.100"/><rect x="-8" y="-7" width="16" height="3" fill="#444" stroke="none"/><path d="M-8 1h16M-3-4v11M3-4v11" stroke-width="1"/></g>
<g transform="translate(938 428)"><path d="M-7-7h14M-7-4.500h14M-7 4h14M-7 6.500h14" stroke-width="1" stroke="#777"/><path d="M-8 0h16" stroke-width="2.400"/></g>
<g transform="translate(966 428)"><circle r="7"/><circle cx="-2.500" cy="-2" r="1" fill="#444" stroke="none"/><circle cx="2.500" cy="-2" r="1" fill="#444" stroke="none"/><path d="M-3.500 2a4 4 0 0 0 7 0"/></g>
<text x="994" y="435" text-anchor="middle" font-size="19" font-weight="bold" fill="#444" stroke="none" font-family="'Liberation Serif',serif">Ω</text>
<g transform="translate(1022 428)"><path d="M-8-2l3 2-3 2z" fill="#333" stroke="none"/><path d="M-3-6H8M-3 6H8" stroke-width="2.200"/><path d="M-3 0h3M2 0h3M7 0h1" stroke-width="1.400"/><path d="M-3-2.500H8M-3 2.500H8" stroke-width=".7" stroke="#999"/></g>
<g transform="translate(1050 428)"><circle r="7"/><path d="M-4-5l4 1 1 3-3 2-1 3-3-4zM2 0l4 0-1 4-2 2-1-3z" fill="#666" stroke="none"/></g>

<!-- Row 6 -->
<text x="1205" y="465" text-anchor="middle" font-size="13" font-weight="bold" fill="#444" stroke="none" font-family="'Liberation Sans',sans-serif">A</text><path d="M1199 468h12" stroke-width="1.600" stroke="#555"/><path d="M1215 458l2.500 3 2.500-3z" fill="#777" stroke="none"/>
<rect x="1233" y="453" width="14" height="13" rx="1" fill="#444" stroke="none"/><text x="1240" y="464" text-anchor="middle" font-size="12" font-weight="bold" fill="#eee" stroke="none" font-family="'Liberation Sans',sans-serif">A</text><path d="M1251 458l2.500 3 2.500-3z" fill="#777" stroke="none"/>
<g transform="translate(1279 460)" fill="#444" stroke="none"><path d="M-7-7h5l-1.500 1.500 2 2-1.500 1.500-2-2L-7-2.500zM7-7v4.500L5.500-4l-2 2L2-3.500l2-2L2.500-7zM-7 7v-4.500L-5.500 4l2-2L-2 3.500l-2 2L-2.500 7zM7 7H2.500L4 5.500l-2-2L3.500 2l2 2L7 2.500z"/></g>
<g transform="translate(1308 460)" stroke="#777" stroke-width="1"><rect x="3" y="-7" width="4" height="14"/><path d="M1-7H-3v9M-7 2h8v5h-8z"/></g>
<text x="854" y="497" text-anchor="middle" font-size="19" font-weight="bold" fill="#444" stroke="none" font-family="'Liberation Sans',sans-serif">?</text>
</svg>
</body></html>
